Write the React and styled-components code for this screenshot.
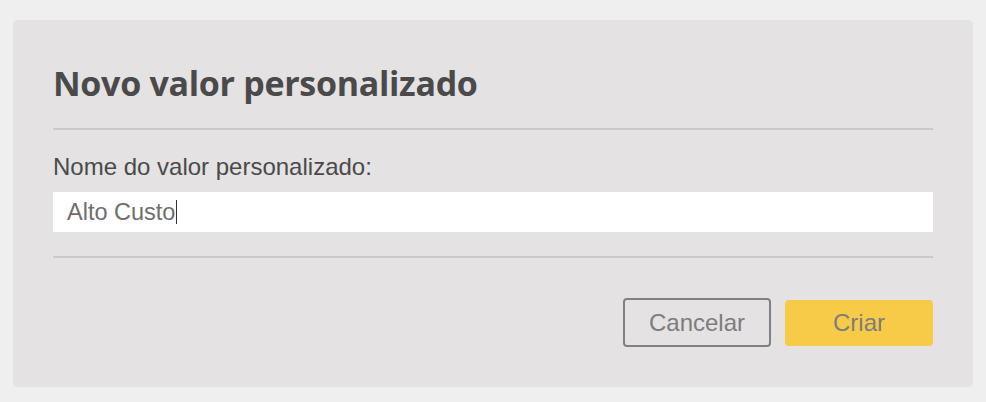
import styled, { createGlobalStyle } from "styled-components";

const GlobalStyle = createGlobalStyle`
  html, body {
    margin: 0;
    padding: 0;
    background: #efefef;
  }
  body {
    font-family: "Liberation Sans", Arial, sans-serif;
  }
`;

export default function App() {
  return (
    <>
      <GlobalStyle />
      <Page>
        <Panel>
          <Title>Novo valor personalizado</Title>
          <Divider />
          <Label>Nome do valor personalizado:</Label>
          <Field>
            Alto Custo
            <Caret />
          </Field>
          <Divider $bottom />
          <Actions>
            <Button $variant="outline">Cancelar</Button>
            <Button $variant="primary">Criar</Button>
          </Actions>
        </Panel>
      </Page>
    </>
  );
}

const Page = styled.div`
  width: 986px;
  height: 402px;
  box-sizing: border-box;
  padding: 20px 13px 0;
`;

const Panel = styled.div`
  width: 960px;
  height: 367px;
  box-sizing: border-box;
  background: #e4e2e3;
  border-radius: 5px;
  padding: 0 40px;
  display: flex;
  flex-direction: column;
`;

const Title = styled.h1`
  margin: 0;
  padding-top: 43px;
  height: 67px;
  box-sizing: border-box;
  font-family: "Open Sans", sans-serif;
  font-weight: 700;
  font-size: 34px;
  line-height: 40px;
  color: #4a4a4a;
  letter-spacing: -0.3px;
`;

const Divider = styled.div`
  height: 2px;
  background: #cbc9ca;
  margin-top: ${(p) => (p.$bottom ? "24px" : "41px")};
`;

const Label = styled.div`
  margin-top: 23px;
  font-size: 24px;
  line-height: 28px;
  color: #4a4a4a;
`;

const Field = styled.div`
  margin-top: 11px;
  height: 40px;
  background: #fff;
  padding: 0 14px;
  display: flex;
  align-items: center;
  font-size: 23.5px;
  color: #6e6e6e;
`;

const Caret = styled.span`
  display: inline-block;
  width: 1px;
  height: 24px;
  background: #333;
  margin-left: 1px;
`;

const Actions = styled.div`
  margin-top: 40px;
  display: flex;
  justify-content: flex-end;
  align-items: center;
  gap: 14px;
`;

const Button = styled.button`
  width: 148px;
  box-sizing: border-box;
  font-family: "Liberation Sans", Arial, sans-serif;
  font-size: 24px;
  color: #7d7d7d;
  border-radius: 4px;
  cursor: pointer;
  ${(p) =>
    p.$variant === "primary"
      ? `
    height: 46px;
    background: #f7cb48;
    border: none;
  `
      : `
    height: 49px;
    background: transparent;
    border: 2px solid #808080;
  `}
`;
